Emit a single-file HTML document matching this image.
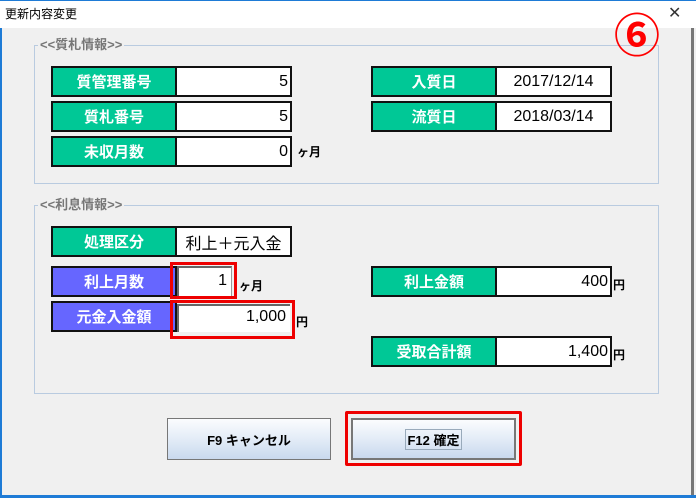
<!DOCTYPE html>
<html><head><meta charset="utf-8"><style>
*{box-sizing:border-box;margin:0;padding:0}
body{width:696px;height:498px;overflow:hidden;background:#f0f0f0;font-family:"Liberation Sans","Noto Sans CJK JP",sans-serif;position:relative}
.a{position:absolute}
.tb{left:0;top:0;width:696px;height:28px;background:#fff;border-top:1px solid #1e7bd6}
.grp{border:1px solid #b9cbe0}
.gl{background:#f0f0f0;color:#777;font-size:13px;font-weight:bold;padding:0 2px;line-height:14px}
.lb{height:31px;border:2px solid #111;color:#fff;font-weight:bold;font-size:15px;display:flex;align-items:center;justify-content:center}
.g{background:#00c896}.p{background:#6666ff}
.vb{height:31px;border:2px solid #111;border-left:0;background:#fff;font-size:16px;display:flex;align-items:center;padding:0 2px;justify-content:flex-end}
.unit{font-size:12px;font-weight:bold}
.red{border:3px solid #ee0000}
.btn{border:1px solid #777;background:linear-gradient(#fbfcfe,#e3ecf7 50%,#c9d9ee);font-weight:bold;font-size:13px;display:flex;align-items:center;justify-content:center}
</style></head><body>
<div class="a tb"></div>
<div class="a" style="left:5px;top:5px;font-size:12px">更新内容変更</div>
<div class="a" style="left:668px;top:3px;font-size:16px;color:#333">✕</div>
<div class="a" style="left:0;top:28px;width:2px;height:470px;background:#1e7bd6"></div>
<div class="a" style="left:691px;top:28px;width:3px;height:470px;background:#777"></div>
<div class="a" style="left:0;top:495px;width:696px;height:3px;background:#1e7bd6"></div>

<div class="a grp" style="left:34px;top:45px;width:625px;height:139px"></div>
<div class="a gl" style="left:38px;top:38px">&lt;&lt;質札情報&gt;&gt;</div>
<div class="a" style="left:614px;top:10px;font-size:46px;font-weight:bold;color:#f00;line-height:52px">⑥</div>

<div class="a lb g" style="left:51px;top:66px;width:126px">質管理番号</div><div class="a vb" style="left:177px;top:66px;width:115px">5</div>
<div class="a lb g" style="left:51px;top:101px;width:126px">質札番号</div><div class="a vb" style="left:177px;top:101px;width:115px">5</div>
<div class="a lb g" style="left:51px;top:136px;width:126px">未収月数</div><div class="a vb" style="left:177px;top:136px;width:115px">0</div>
<div class="a unit" style="left:297px;top:143px">ヶ月</div>
<div class="a lb g" style="left:371px;top:66px;width:126px">入質日</div><div class="a vb" style="left:497px;top:66px;width:115px;justify-content:center">2017/12/14</div>
<div class="a lb g" style="left:371px;top:101px;width:126px">流質日</div><div class="a vb" style="left:497px;top:101px;width:115px;justify-content:center">2018/03/14</div>

<div class="a grp" style="left:34px;top:205px;width:625px;height:189px"></div>
<div class="a gl" style="left:38px;top:198px">&lt;&lt;利息情報&gt;&gt;</div>
<div class="a lb g" style="left:51px;top:226px;width:126px">処理区分</div><div class="a vb" style="left:177px;top:226px;width:115px;justify-content:center">利上＋元入金</div>
<div class="a lb p" style="left:51px;top:266px;width:126px">利上月数</div>
<div class="a" style="left:177px;top:266px;width:55px;height:31px;background:#fff;border:1px solid #999;border-top:2px solid #666;border-left:2px solid #666;font-size:16px;text-align:right;padding:4px 4px 0 0">1</div>
<div class="a red" style="left:170px;top:262px;width:67px;height:37px"></div>
<div class="a unit" style="left:239px;top:277px">ヶ月</div>
<div class="a lb p" style="left:51px;top:301px;width:126px">元金入金額</div>
<div class="a" style="left:177px;top:304px;width:113px;height:28px;background:#fff;border-top:2px solid #666;border-left:2px solid #666;font-size:16px;text-align:right;padding:2px 4px 0 0">1,000</div>
<div class="a red" style="left:170px;top:300px;width:125px;height:39px"></div>
<div class="a unit" style="left:296px;top:313px">円</div>
<div class="a lb g" style="left:371px;top:266px;width:126px">利上金額</div><div class="a vb" style="left:497px;top:266px;width:115px">400</div>
<div class="a unit" style="left:613px;top:276px">円</div>
<div class="a lb g" style="left:371px;top:336px;width:126px">受取合計額</div><div class="a vb" style="left:497px;top:336px;width:115px">1,400</div>
<div class="a unit" style="left:613px;top:346px">円</div>

<div class="a btn" style="left:167px;top:418px;width:164px;height:42px">F9 キャンセル</div>
<div class="a btn" style="left:351px;top:418px;width:165px;height:42px;border:2px solid #777"><span style="border:1px solid #9ab;padding:0 1px">F12 確定</span></div>
<div class="a red" style="left:345px;top:411px;width:177px;height:55px;border-radius:2px"></div>
</body></html>
